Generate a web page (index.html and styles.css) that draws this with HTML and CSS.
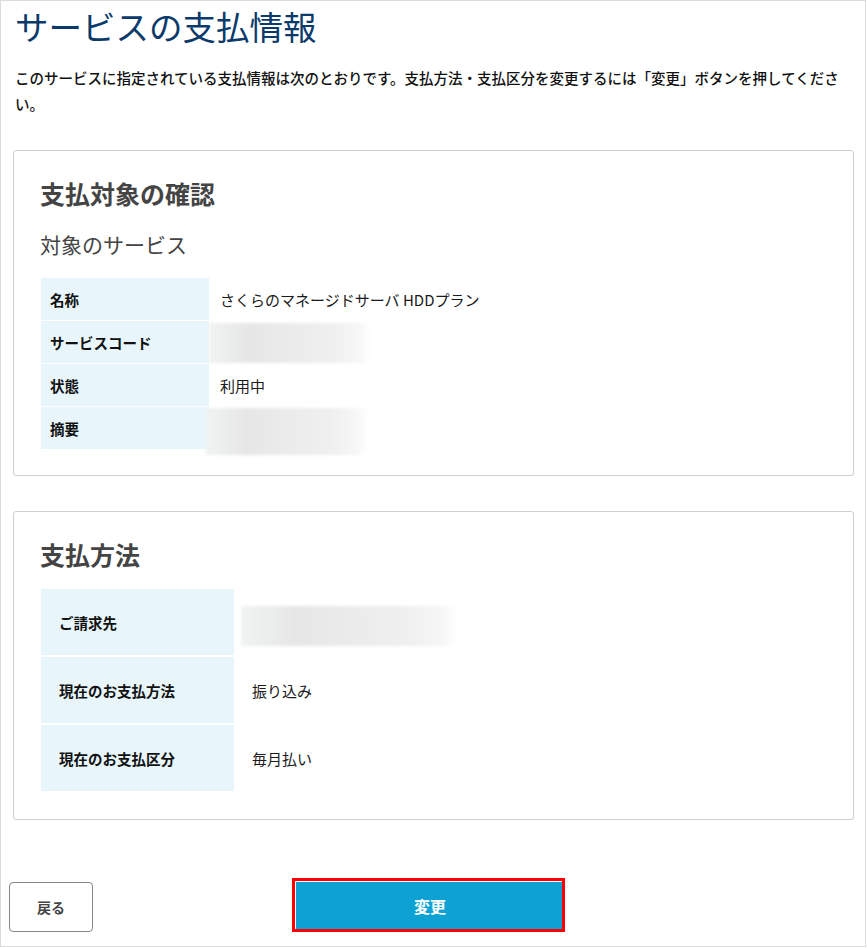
FILE: index.html
```html
<!DOCTYPE html>
<html lang="ja">
<head>
<meta charset="utf-8">
<title>サービスの支払情報</title>
<link rel="stylesheet" href="styles.css">
</head>
<body>
<div class="page">
  <header class="intro">
    <h1 class="title">サービスの支払情報</h1>
    <p class="lead">このサービスに指定されている支払情報は次のとおりです。支払方法・支払区分を変更するには「変更」ボタンを押してください。</p>
  </header>

  <section class="card">
    <h2 class="card-title">支払対象の確認</h2>
    <h3 class="sub-title">対象のサービス</h3>
    <div class="info info-service">
      <div class="label">名称</div>
      <div class="value">さくらのマネージドサーバ HDDプラン</div>
      <div class="label">サービスコード</div>
      <div class="value"><div class="blur blur-code"></div></div>
      <div class="label">状態</div>
      <div class="value">利用中</div>
      <div class="label">摘要</div>
      <div class="value"><div class="blur blur-note"></div></div>
    </div>
  </section>

  <section class="card card-pay">
    <h2 class="card-title">支払方法</h2>
    <div class="info info-pay">
      <div class="label">ご請求先</div>
      <div class="value"><div class="blur blur-bill"></div></div>
      <div class="label">現在のお支払方法</div>
      <div class="value">振り込み</div>
      <div class="label">現在のお支払区分</div>
      <div class="value">毎月払い</div>
    </div>
  </section>

  <div class="actions">
    <button class="btn-back" type="button">戻る</button>
    <div class="highlight">
      <button class="btn-change" type="button">変更</button>
    </div>
  </div>
</div>
</body>
</html>
```

FILE: styles.css
```css
* {
  box-sizing: border-box;
}

html, body {
  margin: 0;
  padding: 0;
  background: #fff;
}

body {
  font-family: "Noto Sans CJK JP", "Noto Sans", sans-serif;
  color: #111;
}

.page {
  width: 866px;
  height: 947px;
  border: 1px solid #dcdcdc;
  padding: 5px 11px 0 12px;
  overflow: hidden;
}

.intro {
  padding: 0 0 0 2px;
}

.title {
  margin: 0;
  font-size: 33.5px;
  line-height: 40px;
  font-weight: 400;
  color: #0b3a6b;
}

.lead {
  margin: 19px 0 0;
  font-size: 14.5px;
  line-height: 26px;
  font-weight: 500;
  color: #111;
}

.card {
  margin-top: 33px;
  border: 1px solid #cfcfcf;
  border-radius: 3px;
  padding: 26px 26px 26px 26px;
}

.card-pay {
  margin-top: 35px;
  padding-bottom: 28px;
}

.card-title {
  margin: 0 0 21px;
  font-size: 25px;
  line-height: 32px;
  font-weight: 700;
  color: #444;
}

.card-pay .card-title {
  margin-bottom: 19px;
}

.sub-title {
  margin: 0 0 20px;
  font-size: 21px;
  line-height: 28px;
  font-weight: 400;
  color: #444;
}

.info {
  display: grid;
  margin-left: 1px;
  font-size: 15px;
}

.info-service {
  grid-template-columns: 168px 1fr;
  grid-auto-rows: 42px;
  row-gap: 1px;
}

.info-pay {
  grid-template-columns: 193px 1fr;
  grid-auto-rows: 66px;
  row-gap: 2px;
}

.label {
  background: #e8f6fc;
  font-size: 14.5px;
  font-weight: 700;
  color: #111;
  display: flex;
  align-items: center;
}

.info-service .label {
  padding-left: 9px;
}

.info-pay .label {
  padding-left: 18px;
}

.value {
  display: flex;
  align-items: center;
  color: #1a1a1a;
  min-width: 0;
}

.info-service .value {
  padding-left: 11px;
}

.info-pay .value {
  padding-left: 18px;
}

.info .value:has(.blur) {
  padding-left: 0;
  align-items: flex-start;
}

.blur {
  background: linear-gradient(90deg, #f1f3f3 0%, #e6e6e6 25%, #ebebeb 50%, #efefef 75%, #f6f6f6 92%, #ffffff 100%);
  filter: blur(1.5px);
  flex: none;
}

.blur-code {
  width: 162px;
  height: 40px;
  margin-top: 2px;
}

.blur-note {
  width: 162px;
  height: 47px;
  margin-top: 1px;
  margin-left: -3px;
}

.blur-bill {
  width: 217px;
  height: 40px;
  margin-top: 17px;
  margin-left: 7px;
}

.actions {
  display: flex;
  align-items: flex-start;
  margin: 58px 0 0 -4px;
}

.btn-back {
  margin-top: 4px;
  width: 84px;
  height: 50px;
  border: 1px solid #888;
  border-radius: 4px;
  background: #fff;
  font-family: inherit;
  font-size: 14px;
  font-weight: 700;
  color: #444;
  padding: 0;
}

.highlight {
  margin-left: 199px;
  border: 3px solid #ff0000;
  width: 273px;
  height: 54px;
}

.btn-change {
  display: block;
  width: 100%;
  height: 100%;
  border: 0;
  border-top: 1px solid #fff;
  border-left: 1px solid #fff;
  background: #0ea2d4;
  color: #fff;
  font-family: inherit;
  font-size: 16px;
  font-weight: 700;
  padding: 0 0 0 2px;
}
```
